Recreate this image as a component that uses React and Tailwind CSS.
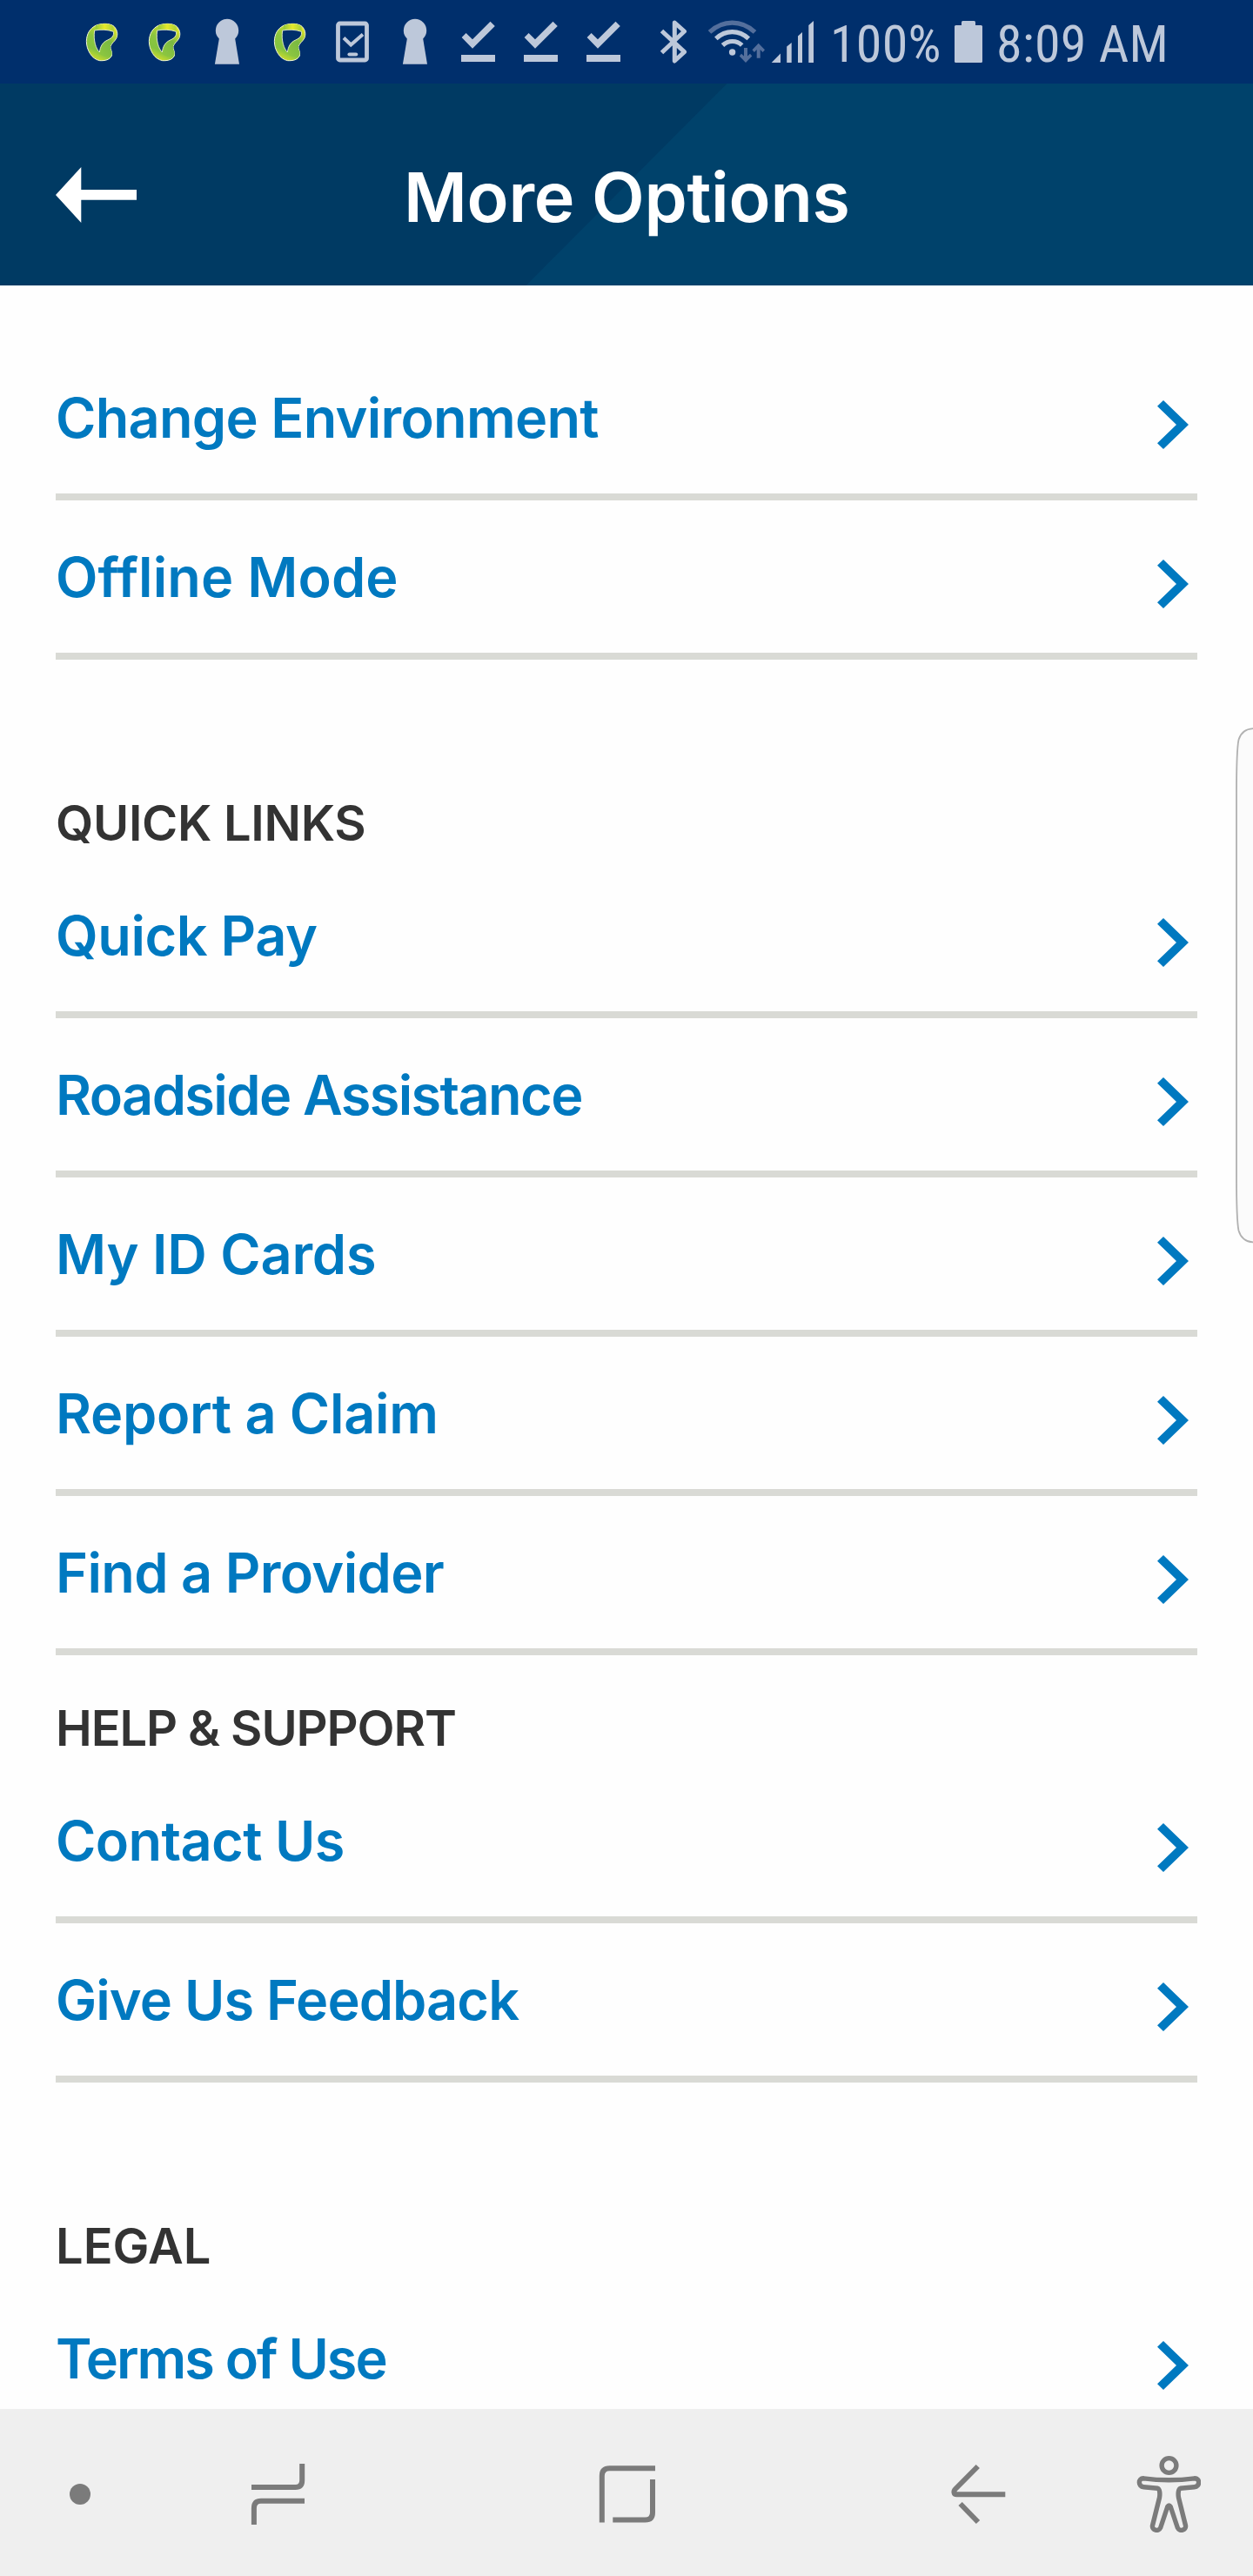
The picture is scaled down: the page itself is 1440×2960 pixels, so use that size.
import React from "react";

const TOP_LINKS = [
  { label: "Change Environment", tracking: "tracking-[-0.71px]" },
  { label: "Offline Mode", tracking: "tracking-[0.1px]" },
];
const QUICK_LINKS = [
  { label: "Quick Pay", tracking: "tracking-[-0.44px]" },
  { label: "Roadside Assistance", tracking: "tracking-[-1.6px]" },
  { label: "My ID Cards", tracking: "tracking-[-0.2px]" },
  { label: "Report a Claim", tracking: "tracking-[-0.3px]" },
  { label: "Find a Provider", tracking: "tracking-[-0.64px]" },
];
const HELP_LINKS = [
  { label: "Contact Us", tracking: "tracking-[-0.6px]" },
  { label: "Give Us Feedback", tracking: "tracking-[-0.93px]" },
];
const LEGAL_LINKS = [{ label: "Terms of Use", tracking: "tracking-[-2px]" }];

function RingLogo() {
  return (
    <svg className="h-24 w-[72px] shrink-0" viewBox="3 0 216 288">
      <defs>
        <linearGradient id="ringBody" x1="0.7" y1="0" x2="0.3" y2="1">
          <stop offset="0" stopColor="#e3e62c" />
          <stop offset="0.45" stopColor="#8cc63f" />
          <stop offset="0.75" stopColor="#84c341" />
          <stop offset="1" stopColor="#d6df2a" />
        </linearGradient>
        <linearGradient id="ringTop" x1="0" y1="0" x2="1" y2="0">
          <stop offset="0" stopColor="#8fc73e" />
          <stop offset="0.5" stopColor="#e6e82a" />
          <stop offset="1" stopColor="#a5cf3a" />
        </linearGradient>
        <linearGradient id="ringFold" x1="1" y1="0" x2="0.3" y2="1">
          <stop offset="0" stopColor="#e3e62c" />
          <stop offset="0.5" stopColor="#7ab942" />
          <stop offset="1" stopColor="#8bc540" />
        </linearGradient>
      </defs>
      <path d="M90 88C105 81 138 78 153 91C164 102 167 117 162 130C157 142 144 149 141 160C139 170 149 178 145 192C139 206 122 210 104 209C76 204 58 172 58 142C59 116 70 98 90 88Z" fill="url(#ringBody)" stroke="#f4f8d8" strokeWidth="3" />
      <path d="M90 88C108 80 140 79 151 91L153 108C135 100 108 100 88 106Z" fill="url(#ringTop)" />
      <path d="M163 122C160 138 142 148 141 160C139 171 149 180 145 190C134 199 115 196 104 186C103 164 113 148 131 140C147 133 153 126 153 108C150 98 162 104 163 122Z" fill="url(#ringFold)" />
      <path d="M86 105C106 101 133 102 151 109C154 122 147 131 131 138C113 146 106 160 103 180C91 168 81 140 86 105Z" fill="#002f6c" stroke="#f4f8d8" strokeWidth="2.500" />
    </svg>
  );
}

function Keyhole() {
  return (
    <svg className="h-24 w-[72px] shrink-0" viewBox="225 0 72 96" fill="#bdc8da">
      <circle cx="261" cy="35" r="13.2" />
      <path d="M252 43.500H270L275 73.700H246.900Z" />
    </svg>
  );
}

function TabletCheck() {
  return (
    <svg className="h-24 w-[72px] shrink-0" viewBox="369 0 72 96" fill="none" stroke="#bdc8da">
      <rect x="388.500" y="27" width="33" height="42" rx="2" strokeWidth="4.800" />
      <path d="M395 43.500L403.300 51.500L417 39.500" strokeWidth="4" />
      <path d="M401.500 62.500H409.200" strokeWidth="4.200" strokeLinecap="round" />
    </svg>
  );
}

function DownloadDone() {
  return (
    <svg className="h-24 w-[72px] shrink-0" viewBox="513 0 72 96" fill="#bdc8da">
      <path d="M530.600 43L535.600 38L543 45.300L563.500 24.700L568.800 30L543 55.700Z" />
      <rect x="530" y="63" width="39" height="8" />
    </svg>
  );
}

function Bluetooth() {
  return (
    <svg className="h-24 w-[81px] shrink-0" viewBox="729 0 81 96" fill="none" stroke="#bdc8da" strokeWidth="5" strokeLinejoin="round">
      <path d="M760.500 35.500L786.500 59.700L775.300 70V26L786.500 36L760.500 60.500" />
    </svg>
  );
}

function Wifi() {
  return (
    <svg className="h-24 w-[72px] shrink-0" viewBox="810 0 72 96" fill="none">
      <path d="M815.500 36.800C831 22.500 852 22.500 867.500 36.800" stroke="#546f9c" strokeWidth="5.200" />
      <path d="M822.800 44.300C834 34 849 34 860.300 44.300" stroke="#bdc8da" strokeWidth="5.200" />
      <path d="M830.500 52C837 46 846.500 46 852.700 52" stroke="#bdc8da" strokeWidth="5.200" />
      <circle cx="841.600" cy="60" r="3.700" fill="#bdc8da" />
      <g fill="#546f9c">
        <path d="M855 55H859V64.500L862 61.800L864.300 64.500L857 72L849.800 64.500L852 61.800L855 64.500Z" />
        <path d="M869.700 66.700H873.700V57L876.500 60L879 57.300L871.700 49.800L864.500 57.300L866.900 60L869.700 57Z" />
      </g>
    </svg>
  );
}

function Signal() {
  return (
    <svg className="h-24 w-[72px] shrink-0" viewBox="882 0 72 96" fill="#bdc8da">
      <path d="M886.700 72L897 61.500V72ZM904.200 72V53.500L909.700 49V72ZM917 72V41.500L922 37V72ZM929.300 72V29L935 24V72Z" />
    </svg>
  );
}

function Battery() {
  return (
    <svg className="h-24 w-[52px] shrink-0" viewBox="1093 0 52 96" fill="#bdc8da">
      <rect x="1105" y="24" width="16" height="8" rx="1.500" />
      <rect x="1097" y="29" width="32" height="43" rx="1.500" />
    </svg>
  );
}

function StatusBar() {
  return (
    <div className="flex h-24 items-start bg-[#002f6c] pl-[81px] text-[60px] leading-[101px] text-[#bdc8da] font-['Roboto_Condensed',Roboto,sans-serif]">
      <RingLogo />
      <RingLogo />
      <Keyhole />
      <RingLogo />
      <TabletCheck />
      <Keyhole />
      <DownloadDone />
      <DownloadDone />
      <DownloadDone />
      <Bluetooth />
      <Wifi />
      <Signal />
      <span className="h-24 w-[139px] shrink-0 whitespace-nowrap tracking-[0.2px]">100%</span>
      <Battery />
      <span className="h-24 whitespace-nowrap tracking-[0.2px]">8:09 AM</span>
    </div>
  );
}

function Header() {
  return (
    <header className="grid h-[232px] bg-[#003a63]">
      <svg className="col-start-1 row-start-1 h-[232px] w-[1440px]" viewBox="0 0 1440 232">
        <path d="M835.500 0H1440V232H604.500Z" fill="#00426b" />
      </svg>
      <div className="col-start-1 row-start-1 flex items-start pl-16 pt-24">
        <svg className="h-16 w-[93px] shrink-0" viewBox="0 0 93 64" fill="#fff">
          <path d="M0 32L29.300 0V26H93V37.700H29.300V64Z" />
        </svg>
        <h1 className="ml-[307px] mt-0.5 whitespace-nowrap text-[79px] font-semibold leading-[64px] tracking-[-0.25px] text-white">
          More Options
        </h1>
      </div>
    </header>
  );
}

function LinkRow({ label, tracking }) {
  return (
    <a className="flex h-[183px] shrink-0 items-center justify-between border-b-8 border-[#d9dad5] pr-[10px]">
      <span className={`pt-px text-[63px] font-semibold leading-[76px] whitespace-nowrap text-[#0079c0] ${tracking}`}>
        {label}
      </span>
      <svg className="mt-4 h-14 w-9" viewBox="0 0 36 56" fill="#0079c0">
        <path d="M0 6.700L7 0L36 28L7 56L0 49.300L22 28Z" />
      </svg>
    </a>
  );
}

function Section({ title, titleTracking, links, className }) {
  return (
    <section className={`flex flex-col ${className}`}>
      {title && (
        <h2 className={`h-[84px] text-[56px] font-semibold leading-[86px] text-[#333333] ${titleTracking}`}>{title}</h2>
      )}
      {links.map((link) => (
        <LinkRow key={link.label} {...link} />
      ))}
    </section>
  );
}

function NavBar() {
  return (
    <nav className="flex h-48 items-center bg-[#efefef]">
      <span className="ml-20 mt-1 size-6 shrink-0 rounded-full bg-[#7b7b7b]" />
      <svg className="ml-[176px] h-48 w-20 shrink-0" viewBox="280 2768 80 192" fill="none" stroke="#7b7b7b" strokeWidth="6">
        <path d="M289 2858H339.500Q347.200 2858 347.200 2850V2831" />
        <path d="M350 2873.800H300Q291.900 2873.800 291.900 2882V2901" />
      </svg>
      <svg className="ml-[320px] h-48 w-20 shrink-0" viewBox="680 2768 80 192" fill="none" stroke="#7b7b7b" strokeWidth="6">
        <path d="M691.800 2898.500V2845Q691.800 2836.300 700.500 2836.300H753" />
        <path d="M704.300 2895.500H741.500Q750 2895.500 750 2887V2849" />
      </svg>
      <svg className="ml-[320px] h-48 w-20 shrink-0" viewBox="1080 2768 80 192" fill="none" stroke="#7b7b7b" strokeWidth="6">
        <path d="M1155.300 2866.300H1099.500C1096 2866.300 1095.500 2862.500 1098 2860L1123.800 2834" />
        <path d="M1103.600 2877L1124 2898" />
      </svg>
      <svg className="ml-[140px] h-48 w-20 shrink-0" viewBox="1300 2768 80 192" fill="none" stroke="#7b7b7b" strokeWidth="5.400" strokeLinejoin="round">
        <circle cx="1343.500" cy="2833" r="8.400" />
        <path d="M1314.300 2847.800Q1343.500 2851.800 1372.700 2847.800C1379.300 2847.500 1379.300 2857.300 1372.700 2857.800L1356.500 2859.200C1354 2860 1353.800 2866 1354.500 2870L1362.500 2902C1363.500 2907.500 1355.500 2909.500 1353.300 2904.500L1345.300 2880.500Q1343.500 2877.500 1341.700 2880.500L1333.700 2904.500C1331.500 2909.500 1323.500 2907.500 1324.500 2902L1332.500 2870C1333.200 2866 1333 2860 1330.500 2859.200L1314.300 2857.800C1307.700 2857.300 1307.700 2847.500 1314.300 2847.800Z" />
      </svg>
    </nav>
  );
}

function EdgeHandle() {
  return (
    <svg className="absolute right-0 top-[832px] h-[600px] w-[22px]" viewBox="1418 832 22 600">
      <path d="M1442 837C1430 837 1425.500 843 1423.500 850Q1421 862 1421 912V1352Q1421 1402 1423.500 1414C1425.500 1421 1430 1427.500 1442 1427.500" fill="#fbfbfb" stroke="#b1b1b1" strokeWidth="1.800" />
    </svg>
  );
}

export default function App() {
  return (
    <div className="relative flex h-[2960px] w-[1440px] flex-col overflow-hidden bg-[#fefefe] font-[Inter,sans-serif]">
      <StatusBar />
      <Header />
      <main className="h-[2440px] overflow-hidden px-16 pt-16">
        <Section links={TOP_LINKS} className="" />
        <Section title="QUICK LINKS" titleTracking="tracking-[-0.3px]" links={QUICK_LINKS} className="mt-[145px]" />
        <Section title="HELP & SUPPORT" titleTracking="tracking-[-1.1px]" links={HELP_LINKS} className="mt-[41px]" />
        <Section title="LEGAL" titleTracking="tracking-normal" links={LEGAL_LINKS} className="mt-[145px]" />
      </main>
      <NavBar />
      <EdgeHandle />
    </div>
  );
}
